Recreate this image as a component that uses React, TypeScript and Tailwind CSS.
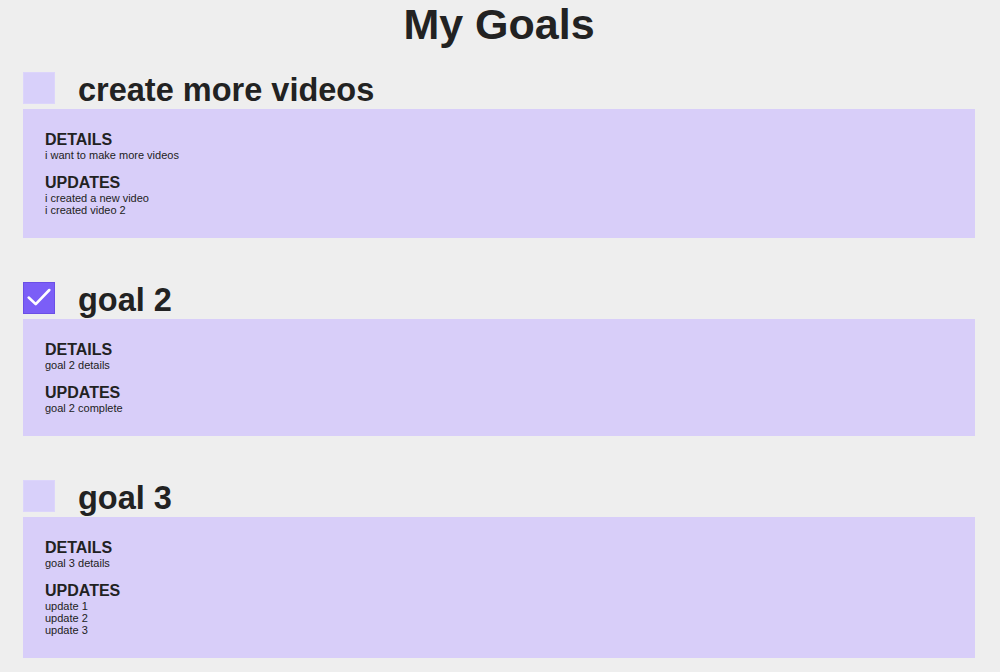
const goals = [
  {
    title: 'create more videos',
    done: false,
    details: 'i want to make more videos',
    updates: ['i created a new video', 'i created video 2'],
  },
  {
    title: 'goal 2',
    done: true,
    details: 'goal 2 details',
    updates: ['goal 2 complete'],
  },
  {
    title: 'goal 3',
    done: false,
    details: 'goal 3 details',
    updates: ['update 1', 'update 2', 'update 3'],
  },
];

function Checkbox({ checked }: { checked: boolean }) {
  if (!checked) {
    return <div className="w-8 h-8 shrink-0 mt-[0.5px] bg-[#d8d0fa] border border-[#dcd5fb]" />;
  }
  return (
    <div className="w-8 h-8 shrink-0 mt-[0.5px] bg-[#7b5ef7] border border-[#6b4fe6] flex items-center justify-center">
      <svg width="32" height="32" viewBox="0 0 32 32" fill="none">
        <path d="M5 15.5 L12.5 22.5 L27 7.5" stroke="white" strokeWidth="2.8" strokeLinecap="round" strokeLinejoin="round" />
      </svg>
    </div>
  );
}

export default function App() {
  return (
    <div className="min-h-[672px] bg-[#eeeeee] pl-[23px] pr-[25px] pb-6 text-[#222222] font-['Liberation_Sans',Arial,sans-serif]">
      <h1 className="text-center text-[43px] font-bold leading-[normal] mb-[22.5px]">My Goals</h1>

      <div className="flex flex-col gap-[44px]">
        {goals.map((goal) => (
          <div key={goal.title}>
            {/* heading row */}
            <div className="flex items-start gap-[23px]">
              <Checkbox checked={goal.done} />
              <h2 className="text-[32.5px] font-bold leading-[normal] h-[37px]">{goal.title}</h2>
            </div>

            {/* panel */}
            <div className="bg-[#d8cef9] p-[22px]">
              <div className="mb-[13px]">
                <h3 className="text-[16px] font-bold leading-[normal]">DETAILS</h3>
                <p className="text-[11px] leading-[12px]">{goal.details}</p>
              </div>
              <div>
                <h3 className="text-[16px] font-bold leading-[normal]">UPDATES</h3>
                {goal.updates.map((u) => (
                  <p key={u} className="text-[11px] leading-[12px]">
                    {u}
                  </p>
                ))}
              </div>
            </div>
          </div>
        ))}
      </div>
    </div>
  );
}
